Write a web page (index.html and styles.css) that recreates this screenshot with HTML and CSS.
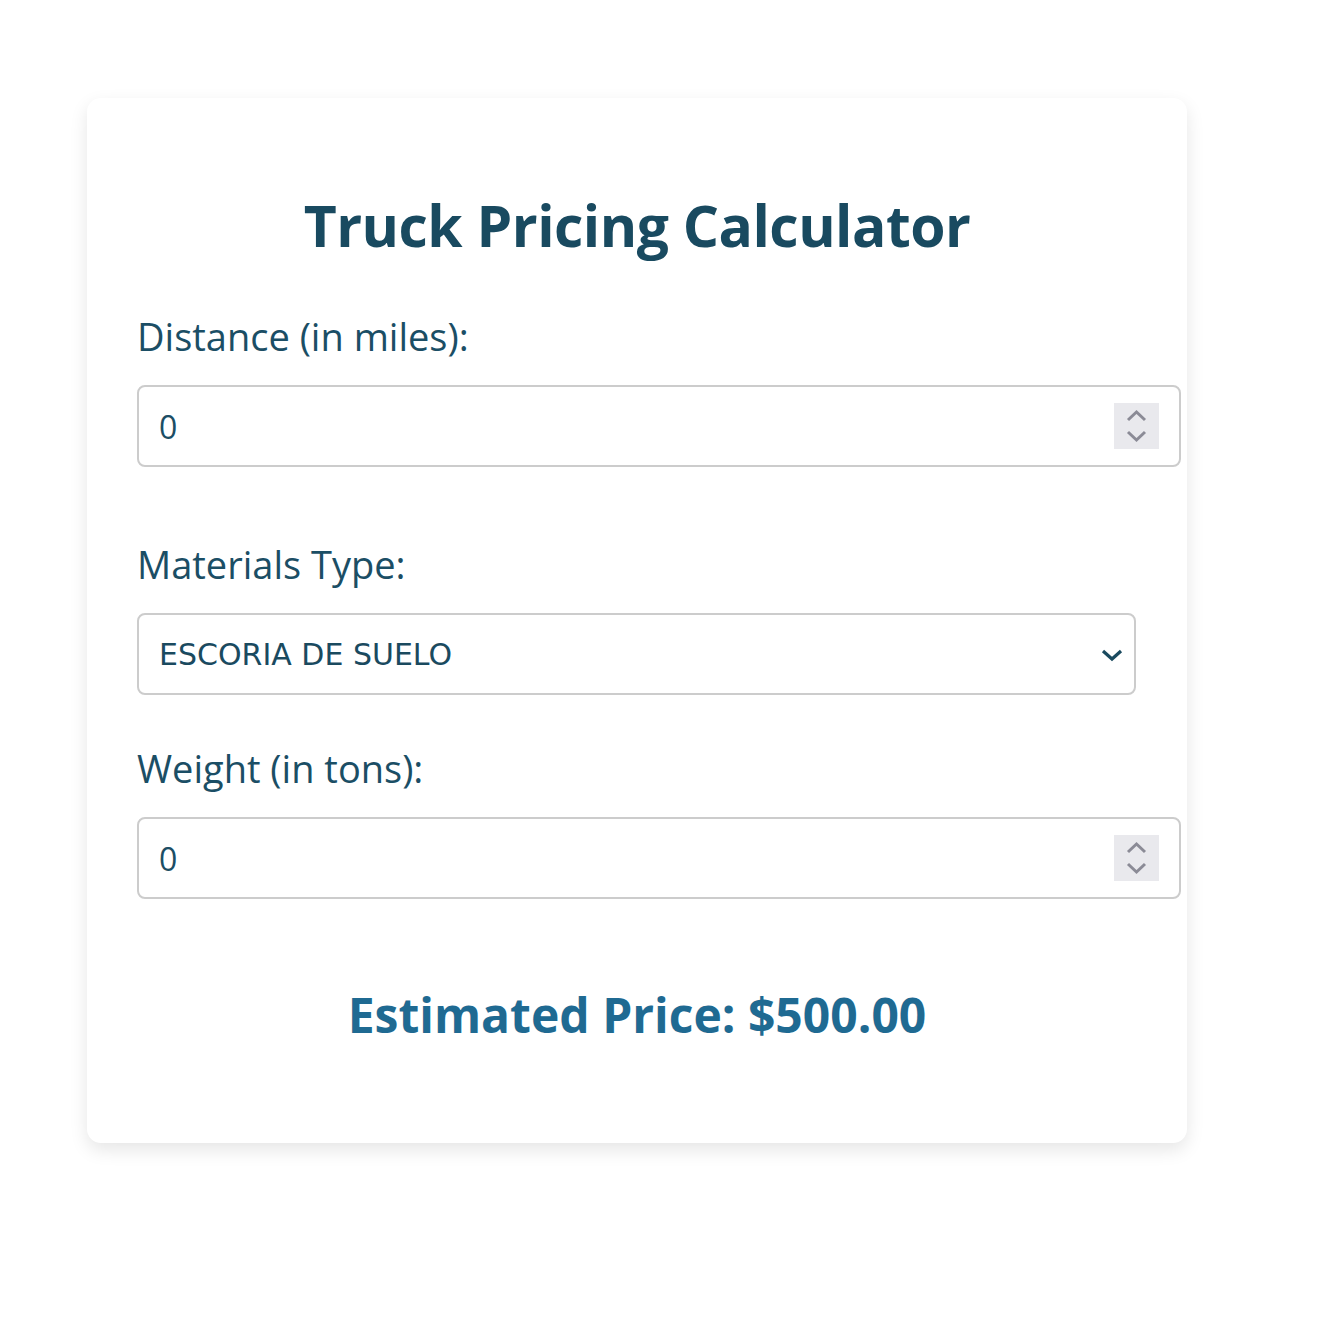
FILE: index.html
```html
<!DOCTYPE html>
<html lang="en">
<head>
<meta charset="utf-8">
<title>Truck Pricing Calculator</title>
<link rel="stylesheet" href="styles.css">
</head>
<body>
<div class="card">
  <h1 class="title">Truck Pricing Calculator</h1>

  <label class="label label-first" for="distance">Distance (in miles):</label>
  <div class="field field-number">
    <input class="num-input" id="distance" type="number" value="0">
    <span class="spinner" aria-hidden="true">
      <svg width="45" height="46" viewBox="0 0 45 46"><path d="M14 17 L22.5 9 L31 17" fill="none" stroke="#8b8b96" stroke-width="3"/><path d="M14 29 L22.5 37 L31 29" fill="none" stroke="#8b8b96" stroke-width="3"/></svg>
    </span>
  </div>

  <label class="label label-second" for="material">Materials Type:</label>
  <div class="field field-select">
    <select class="sel" id="material">
      <option>ESCORIA DE SUELO</option>
    </select>
    <span class="chevron" aria-hidden="true">
      <svg width="22" height="14" viewBox="0 0 22 14"><path d="M2 3 L11 11 L20 3" fill="none" stroke="#1a4a5f" stroke-width="3.2"/></svg>
    </span>
  </div>

  <label class="label label-third" for="weight">Weight (in tons):</label>
  <div class="field field-number">
    <input class="num-input" id="weight" type="number" value="0">
    <span class="spinner" aria-hidden="true">
      <svg width="45" height="46" viewBox="0 0 45 46"><path d="M14 17 L22.5 9 L31 17" fill="none" stroke="#8b8b96" stroke-width="3"/><path d="M14 29 L22.5 37 L31 29" fill="none" stroke="#8b8b96" stroke-width="3"/></svg>
    </span>
  </div>

  <div class="price">Estimated Price: $500.00</div>
</div>
</body>
</html>
```

FILE: styles.css
```css
html, body {
  margin: 0;
  padding: 0;
  background: #ffffff;
}

body {
  font-family: "Open Sans", "Noto Sans", sans-serif;
  padding-bottom: 60px;
}

.card {
  box-sizing: border-box;
  width: 1100px;
  margin: 98px 0 0 87px;
  padding: 91px 50px 98px;
  background: #ffffff;
  border-radius: 14px;
  box-shadow: 0 7px 18px rgba(0, 0, 0, 0.1);
  display: flex;
  flex-direction: column;
}

.title {
  margin: 0;
  font-size: 57px;
  line-height: 72px;
  font-weight: 700;
  color: #194a60;
  text-align: center;
  letter-spacing: -0.5px;
}

.label {
  display: block;
  font-size: 38px;
  line-height: 46px;
  color: #1b4e65;
}

.label-first { margin-top: 52px; margin-bottom: 26px; }
.label-second { margin-top: 74px; margin-bottom: 26px; }
.label-third { margin-top: 50px; margin-bottom: 26px; }

.field {
  position: relative;
  display: flex;
}

.field-number {
  width: 1044px;
}

.field-select {
  width: 999px;
}

.num-input {
  box-sizing: border-box;
  width: 100%;
  height: 82px;
  padding: 0 20px;
  border: 2px solid #cccccc;
  border-radius: 8px;
  font-family: "Open Sans", "Noto Sans", sans-serif;
  font-size: 32px;
  color: #1b4e65;
  background: #ffffff;
  outline: none;
  -moz-appearance: textfield;
}

.num-input::-webkit-inner-spin-button,
.num-input::-webkit-outer-spin-button {
  -webkit-appearance: none;
  margin: 0;
}

.spinner {
  position: absolute;
  right: 22px;
  top: 18px;
  width: 45px;
  height: 46px;
  background: #e9e9ed;
  display: flex;
}

.sel {
  box-sizing: border-box;
  width: 100%;
  height: 82px;
  padding: 0 20px;
  border: 2px solid #cccccc;
  border-radius: 8px;
  font-family: "DejaVu Sans", sans-serif;
  font-size: 30px;
  color: #1a4a5f;
  background: #ffffff;
  -webkit-appearance: none;
  appearance: none;
  outline: none;
}

.chevron {
  position: absolute;
  right: 13px;
  top: 35px;
  width: 22px;
  height: 14px;
  display: flex;
}

.price {
  margin-top: 86px;
  font-size: 48px;
  line-height: 60px;
  font-weight: 700;
  color: #1f6a92;
  text-align: center;
}
```
